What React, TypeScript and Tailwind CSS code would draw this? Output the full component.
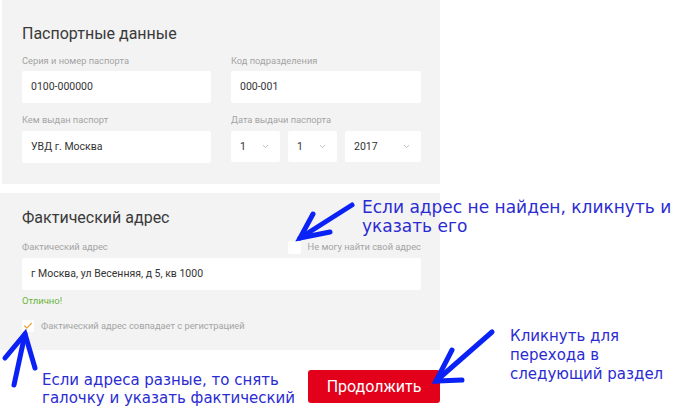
import { ChevronDown, Check } from 'lucide-react';

const FORM_FONT = { fontFamily: 'Roboto, "Noto Sans", sans-serif' };
const NOTE_FONT = { fontFamily: '"DejaVu Sans", Verdana, sans-serif' };

function Field({ value, className = '' }: { value: string; className?: string }) {
    return (
        <div className={`h-[32px] bg-white rounded-[2px] flex items-center px-[9px] text-[10.5px] text-[#333] ${className}`}>
            {value}
        </div>
    );
}

function Select({ value, w }: { value: string; w: string }) {
    return (
        <div className={`h-[31px] ${w} bg-white rounded-[2px] flex items-center justify-between pl-[9px] pr-[10px] text-[10.5px] text-[#333]`}>
            <span>{value}</span>
            <ChevronDown size={9} className="text-[#aaa]" strokeWidth={2} />
        </div>
    );
}

function Label({ children }: { children: React.ReactNode }) {
    return <div className="h-[14px] leading-[14px] text-[9.3px] text-[#a3a3a3]">{children}</div>;
}

function Arrows() {
    return (
        <svg className="absolute inset-0 pointer-events-none" width="700" height="415" viewBox="0 0 700 415">
            <g stroke="#0a22f5" strokeWidth="5" strokeLinecap="round" fill="none">
                {/* to "can't find address" checkbox */}
                <path d="M352 205 L300 238" />
                <path d="M313 214 L300 238 L330 232" />
                {/* to "same address" checkbox */}
                <path d="M14 385 L25 334" />
                <path d="M5 358 L25 334 L35 368" />
                {/* to continue button */}
                <path d="M492 332 L436 381" />
                <path d="M452 350 L436 381 L462 380" />
            </g>
        </svg>
    );
}

export default function App() {
    return (
        <div className="relative w-[700px] h-[415px] bg-white overflow-hidden" style={FORM_FONT}>
            <div className="w-[440px]">
                {/* Passport */}
                <section className="ml-[2px] h-[184px] bg-[#f3f3f3] pt-[22px] pl-[20px] pr-[17px]">
                    <h2 className="h-[24px] leading-[24px] text-[16px] text-[#3a3a3a]">Паспортные данные</h2>
                    <div className="grid grid-cols-[189px_190px] gap-x-[20px] mt-[8px]">
                        <div>
                            <Label>Серия и номер паспорта</Label>
                            <Field value="0100-000000" className="mt-[3px]" />
                        </div>
                        <div>
                            <Label>Код подразделения</Label>
                            <Field value="000-001" className="mt-[3px]" />
                        </div>
                        <div className="mt-[10px]">
                            <Label>Кем выдан паспорт</Label>
                            <Field value="УВД г. Москва" className="mt-[4px] h-[31px]" />
                        </div>
                        <div className="mt-[10px]">
                            <Label>Дата выдачи паспорта</Label>
                            <div className="mt-[4px] flex gap-[8px]">
                                <Select value="1" w="w-[49px]" />
                                <Select value="1" w="w-[49px]" />
                                <Select value="2017" w="w-[76px]" />
                            </div>
                        </div>
                    </div>
                </section>

                {/* Address */}
                <section className="mt-[9px] h-[157px] bg-[#f3f3f3] pt-[13px] pl-[22px] pr-[19px]">
                    <h2 className="h-[24px] leading-[24px] text-[16px] text-[#3a3a3a]">Фактический адрес</h2>
                    <div className="mt-[10px] flex items-center justify-between">
                        <Label>Фактический адрес</Label>
                        <div className="flex items-center gap-[7px]">
                            <span className="w-[13px] h-[13px] bg-white rounded-[2px]" />
                            <span className="text-[9.3px] text-[#a3a3a3] leading-[14px]">Не могу найти свой адрес</span>
                        </div>
                    </div>
                    <Field value="г Москва, ул Весенняя, д 5, кв 1000" className="mt-[4px] h-[31px]" />
                    <div className="mt-[4px] h-[14px] leading-[14px] text-[9.5px] text-[#6cb33f]">Отлично!</div>
                    <div className="mt-[11px] flex items-center gap-[7px]">
                        <span className="w-[12px] h-[12px] bg-white rounded-[2px] flex items-center justify-center">
                            <Check size={10} strokeWidth={3} className="text-[#f0a030]" />
                        </span>
                        <span className="text-[9.3px] text-[#a3a3a3] leading-[14px]">Фактический адрес совпадает с регистрацией</span>
                    </div>
                </section>

                <div className="mt-[20px] flex justify-end">
                    <button className="w-[132px] h-[33px] bg-[#e2001a] rounded-[3px] text-white text-[16px]">Продолжить</button>
                </div>
            </div>

            {/* Notes */}
            <p className="absolute left-[362px] top-[198px] text-[17px] leading-[19px] text-[#2b2bd2]" style={NOTE_FONT}>
                Если адрес не найден, кликнуть и<br />указать его
            </p>
            <p className="absolute left-[42px] top-[371px] text-[15px] leading-[18px] text-[#2b2bd2]" style={NOTE_FONT}>
                Если адреса разные, то снять<br />галочку и указать фактический
            </p>
            <p className="absolute left-[510px] top-[327px] text-[15px] leading-[19px] text-[#2b2bd2]" style={NOTE_FONT}>
                Кликнуть для<br />перехода в<br />следующий раздел
            </p>

            <Arrows />
        </div>
    );
}
